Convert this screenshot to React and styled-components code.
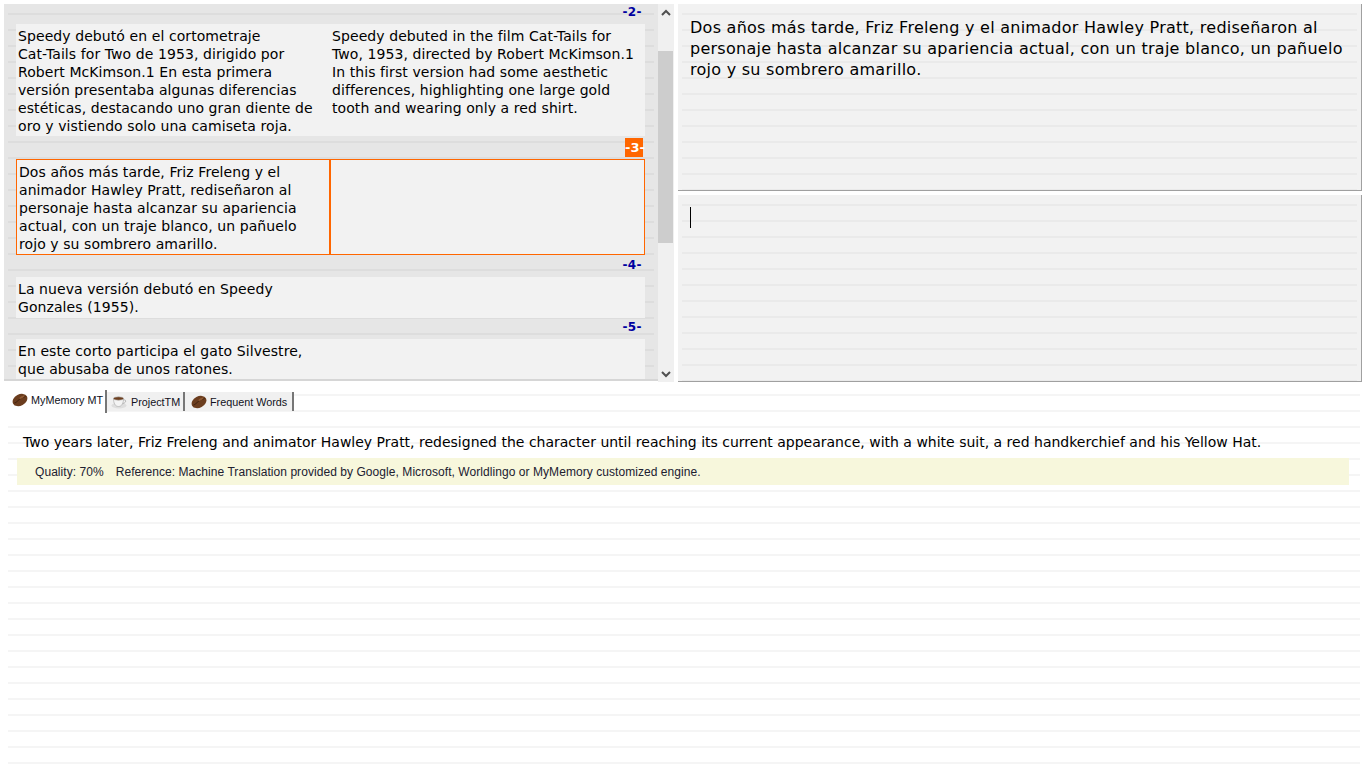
import React from 'react'
import styled, { createGlobalStyle, css } from 'styled-components'

const GlobalStyle = createGlobalStyle`
  html, body {
    margin: 0;
    padding: 0;
    background: #fff;
    overflow: hidden;
  }
  * {
    box-sizing: border-box;
  }
`

// every panel of the app has the same ruled-paper background
const ruled = (base, line) => css`
  background:
    linear-gradient(to bottom, transparent 9px, ${line} 9px, ${line} 11px, transparent 11px)
      4px 0 / calc(100% - 8px) 16px repeat-y,
    ${base};
`

const Page = styled.div`
  width: 1366px;
  height: 768px;
  display: flex;
  flex-direction: column;
  color: #000;
  font-family: "DejaVu Sans", Verdana, sans-serif;
`

const Workspace = styled.div`
  display: flex;
  height: 385px;
  padding: 4px 4px 3px;
`

const SegmentList = styled.div`
  width: 654px;
  height: 377px;
  overflow: hidden;
  padding: 0 13px 0 12px;
  border-bottom: 2px solid #d6d6d6;
  ${ruled('#e6e6e6', '#dddddd')}
`

const NumberRow = styled.div`
  height: ${p => p.$height}px;
  display: flex;
  justify-content: flex-end;
  align-items: flex-start;
  padding-right: 2px;
`

const SegmentNumber = styled.span`
  margin-top: ${p => p.$top}px;
  font-size: 12px;
  font-weight: bold;
  line-height: 17px;
  letter-spacing: 0.4px;
  padding: 0 1px;
  color: #0000a0;
`

const ActiveNumber = styled.span`
  margin-top: 2px;
  width: 18px;
  height: 19px;
  font-size: 13px;
  font-weight: bold;
  line-height: 19px;
  text-align: center;
  white-space: nowrap;
  color: #fff;
  background: #ff6600;
`

const Segment = styled.div`
  display: grid;
  grid-template-columns: 314px 315px;
  height: ${p => p.$height}px;
  background: #f2f2f2;
`

const Cell = styled.div`
  padding: 3px 2px 0;
  font-size: 14px;
  letter-spacing: 0.08px;
  line-height: 18px;
  white-space: nowrap;
  ${p => p.$active && css`
    border: 1px solid #ff6600;
  `}
`

const Scrollbar = styled.div`
  width: 16px;
  height: 378px;
  background: #f0f0f0;
  display: flex;
  flex-direction: column;
  align-items: center;
`

const ArrowBox = styled.div`
  height: 16px;
  flex: none;
  display: flex;
  align-items: center;
  justify-content: center;
`

const Thumb = styled.div`
  width: 15px;
  height: 192px;
  margin: 31px 1px 0 0;
  background: #cdcdcd;
`

const Spacer = styled.div`
  flex: 1;
`

const EditorColumn = styled.div`
  width: 684px;
  margin-left: 4px;
  display: flex;
  flex-direction: column;
  gap: 4px;
`

const EditorPane = styled.div`
  height: 187px;
  padding: ${p => (p.$source ? '13px 12px' : '12px')};
  font-size: 16px;
  letter-spacing: 0.26px;
  line-height: 21px;
  white-space: nowrap;
  border-right: 1px solid #a0a0a0;
  border-bottom: 1px solid #a0a0a0;
  ${ruled('#f2f2f2', '#eaeaea')}
`

const Caret = styled.div`
  width: 1px;
  height: 21px;
  background: #000;
`

const MatchesArea = styled.div`
  flex: 1;
  margin: 0 2px 0 4px;
  padding: 5px 0 0 4px;
  ${ruled('#fff', '#f5f5f5')}
`

const TabStrip = styled.div`
  display: flex;
  align-items: center;
  height: 23px;
`

const Tab = styled.div`
  display: flex;
  align-items: center;
  gap: ${p => p.$gap}px;
  width: ${p => p.$width}px;
  height: ${p => (p.$active ? 23 : 19)}px;
  padding-left: ${p => p.$pad}px;
  border-right: 2px solid #767676;
  background: ${p => (p.$active ? '#fff' : '#f0f0f0')};
  font-family: "Liberation Sans", Arial, sans-serif;
  font-size: 10.8px;
  color: #101020;
  ${p => p.$active && css`
    padding-bottom: 3px;
  `}
`

const MatchText = styled.div`
  margin: 20px 0 0 15px;
  font-size: 14px;
  line-height: 18px;
  white-space: nowrap;
`

const MatchInfo = styled.div`
  display: flex;
  gap: 12px;
  width: 1332px;
  height: 27px;
  margin: 7px 0 0 9px;
  padding-left: 18px;
  align-items: center;
  background: #f7f7dc;
  font-family: "Liberation Sans", Arial, sans-serif;
  font-size: 12px;
  letter-spacing: 0.06px;
  color: #202030;
`

const Chevron = ({ up }) => (
  <svg width="10" height="7" viewBox="0 0 10 7">
    <path
      d={up ? 'M1 6 L5 2 L9 6' : 'M1 1 L5 5 L9 1'}
      fill="none"
      stroke="#505050"
      strokeWidth="2"
    />
  </svg>
)

const Bean = () => (
  <svg width="16" height="14" viewBox="0 0 16 14">
    <ellipse cx="8" cy="7" rx="7.8" ry="5.6" transform="rotate(-28 8 7)" fill="#6b3d1e" />
    <path d="M2.5 10 C6 9 6 5.5 13.5 3.5" fill="none" stroke="#3a1e0c" strokeWidth="1" />
    <ellipse cx="10" cy="4.2" rx="3" ry="1" transform="rotate(-28 10 4.2)" fill="#8f5a33" />
  </svg>
)

const Cup = () => (
  <svg width="16" height="15" viewBox="0 0 16 15">
    <ellipse cx="8" cy="11.5" rx="7.5" ry="3" fill="#dedede" />
    <path d="M2.5 4.5 C2.5 9 4 12.5 7.5 12.5 C11 12.5 12.5 9 12.5 4.5 Z" fill="#f4f4f4" stroke="#b5b5b5" strokeWidth="0.8" />
    <path d="M12.5 6 C15.5 5 15.5 9 11.8 9.5" fill="none" stroke="#b5b5b5" strokeWidth="1" />
    <ellipse cx="7.5" cy="4.5" rx="5" ry="1.7" fill="#6e4020" stroke="#b5b5b5" strokeWidth="0.6" />
  </svg>
)

const App = () => (
  <Page>
    <GlobalStyle />
    <Workspace>
      <SegmentList>
        <NumberRow $height={20}><SegmentNumber $top={0}>-2-</SegmentNumber></NumberRow>
        <Segment $height={112}>
          <Cell>
            Speedy debutó en el cortometraje<br />
            Cat-Tails for Two de 1953, dirigido por<br />
            Robert McKimson.1 En esta primera<br />
            versión presentaba algunas diferencias<br />
            estéticas, destacando uno gran diente de<br />
            oro y vistiendo solo una camiseta roja.
          </Cell>
          <Cell>
            Speedy debuted in the film Cat-Tails for<br />
            Two, 1953, directed by Robert McKimson.1<br />
            In this first version had some aesthetic<br />
            differences, highlighting one large gold<br />
            tooth and wearing only a red shirt.
          </Cell>
        </Segment>
        <NumberRow $height={23}><ActiveNumber>-3-</ActiveNumber></NumberRow>
        <Segment $height={96}>
          <Cell $active>
            Dos años más tarde, Friz Freleng y el<br />
            animador Hawley Pratt, rediseñaron al<br />
            personaje hasta alcanzar su apariencia<br />
            actual, con un traje blanco, un pañuelo<br />
            rojo y su sombrero amarillo.
          </Cell>
          <Cell $active />
        </Segment>
        <NumberRow $height={22}><SegmentNumber $top={2}>-4-</SegmentNumber></NumberRow>
        <Segment $height={41}>
          <Cell>
            La nueva versión debutó en Speedy<br />
            Gonzales (1955).
          </Cell>
          <Cell />
        </Segment>
        <NumberRow $height={21}><SegmentNumber $top={1}>-5-</SegmentNumber></NumberRow>
        <Segment $height={41}>
          <Cell>
            En este corto participa el gato Silvestre,<br />
            que abusaba de unos ratones.
          </Cell>
          <Cell />
        </Segment>
      </SegmentList>
      <Scrollbar>
        <ArrowBox><Chevron up /></ArrowBox>
        <Thumb />
        <Spacer />
        <ArrowBox><Chevron /></ArrowBox>
      </Scrollbar>
      <EditorColumn>
        <EditorPane $source>
          Dos años más tarde, Friz Freleng y el animador Hawley Pratt, rediseñaron al<br />
          personaje hasta alcanzar su apariencia actual, con un traje blanco, un pañuelo<br />
          rojo y su sombrero amarillo.
        </EditorPane>
        <EditorPane><Caret /></EditorPane>
      </EditorColumn>
    </Workspace>
    <MatchesArea>
      <TabStrip>
        <Tab $active $width={99} $pad={4} $gap={3}><Bean />MyMemory MT</Tab>
        <Tab $width={78} $pad={4} $gap={4}><Cup />ProjectTM</Tab>
        <Tab $width={109} $pad={6} $gap={3}><Bean />Frequent Words</Tab>
      </TabStrip>
      <MatchText>
        Two years later, Friz Freleng and animator Hawley Pratt, redesigned the character until reaching its current appearance, with a white suit, a red handkerchief and his Yellow Hat.
      </MatchText>
      <MatchInfo>
        <span>Quality: 70%</span>
        <span>Reference: Machine Translation provided by Google, Microsoft, Worldlingo or MyMemory customized engine.</span>
      </MatchInfo>
    </MatchesArea>
  </Page>
)

export default App
